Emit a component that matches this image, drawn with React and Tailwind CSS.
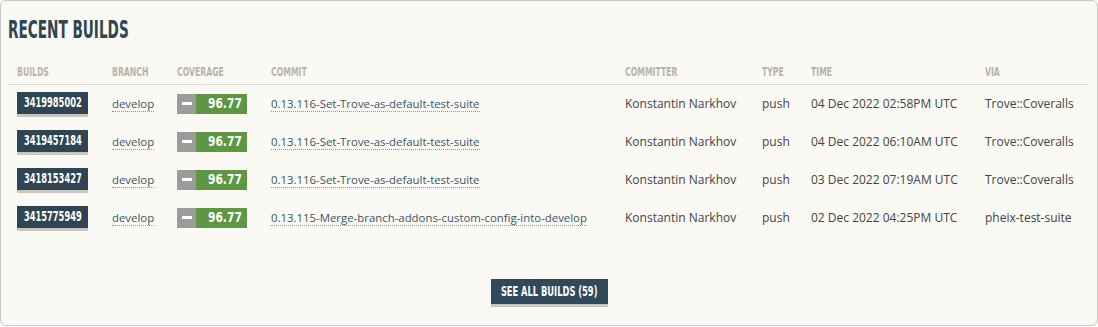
const builds = [
  { id: "3419985002", commit: "0.13.116-Set-Trove-as-default-test-suite", time: "04 Dec 2022 02:58PM UTC", via: "Trove::Coveralls" },
  { id: "3419457184", commit: "0.13.116-Set-Trove-as-default-test-suite", time: "04 Dec 2022 06:10AM UTC", via: "Trove::Coveralls" },
  { id: "3418153427", commit: "0.13.116-Set-Trove-as-default-test-suite", time: "03 Dec 2022 07:19AM UTC", via: "Trove::Coveralls" },
  { id: "3415775949", commit: "0.13.115-Merge-branch-addons-custom-config-into-develop", time: "02 Dec 2022 04:25PM UTC", via: "pheix-test-suite" },
]

// condensed headline font, squeezed with scale-x below
const cond = "font-['DejaVu_Sans_Condensed',sans-serif] font-bold"

const App = () => {
  return (
    <div className="w-[1098px] h-[327px] bg-white">
      <div className="h-[326px] border border-[#c8c8c8] rounded-[6px] bg-[#faf9f4] px-[7px] pt-[14px] font-['Open_Sans',sans-serif]">
        <h2 className={`${cond} text-[24px] leading-[30px] text-[#2f4553] whitespace-nowrap`}>
          <span className="inline-block scale-x-[0.63] origin-left">RECENT BUILDS</span>
        </h2>

        <table className="mt-[19px] w-[1081px] table-fixed border-collapse">
          <colgroup>
            <col className="w-[95px]" />
            <col className="w-[65px]" />
            <col className="w-[94px]" />
            <col className="w-[354px]" />
            <col className="w-[137px]" />
            <col className="w-[49px]" />
            <col className="w-[174px]" />
            <col />
          </colgroup>
          <thead>
            <tr className={`${cond} text-[13px] text-[#b8b2a9] text-left border-b border-[#e2ded6]`}>
              {["BUILDS", "BRANCH", "COVERAGE", "COMMIT", "COMMITTER", "TYPE", "TIME", "VIA"].map((h) => (
                <th key={h} className="pl-[9px] pb-[4px] font-bold leading-[16px] whitespace-nowrap">
                  <span className="inline-block scale-x-[0.66] origin-left">{h}</span>
                </th>
              ))}
            </tr>
          </thead>
          <tbody>
            {builds.map((b) => (
              <tr key={b.id} className="h-[38px] text-[12px] text-[#444]">
                <td className="pl-[9px]">
                  <div className={`${cond} flex justify-center items-center w-[71px] h-[22px] mb-[2px] bg-[#2f4553] text-white text-[14px] shadow-[0_3px_0_#c9c6bf] whitespace-nowrap`}>
                    <span className="inline-block scale-x-[0.66]">{b.id}</span>
                  </div>
                </td>
                <td className="pl-[9px]">
                  <span className="text-[11.4px] text-[#3c5568] border-b border-dotted border-[#8a96a0]">develop</span>
                </td>
                <td className="pl-[9px]">
                  <div className="flex h-[20px] w-[70px]">
                    <div className="w-[19px] bg-[#9b9b9b] flex items-center justify-center">
                      <div className="w-[10px] h-[3px] bg-white" />
                    </div>
                    <div className={`${cond} flex-1 bg-[#5e9743] text-white text-[14px] flex items-center justify-end pr-[5px] whitespace-nowrap`}>
                      <span className="inline-block scale-x-[0.85] origin-right">96.77</span>
                    </div>
                  </div>
                </td>
                <td className="pl-[9px] whitespace-nowrap">
                  <span className="text-[11.4px] text-[#3c5568] border-b border-dotted border-[#8a96a0]">{b.commit}</span>
                </td>
                <td className="pl-[9px] whitespace-nowrap">Konstantin Narkhov</td>
                <td className="pl-[9px]">push</td>
                <td className="pl-[9px] whitespace-nowrap">{b.time}</td>
                <td className="pl-[9px] whitespace-nowrap">{b.via}</td>
              </tr>
            ))}
          </tbody>
        </table>

        <div className="flex justify-center mt-[42px]">
          <button className={`${cond} flex items-center justify-center w-[117px] h-[25px] bg-[#2f4a5a] text-white text-[14px] shadow-[0_3px_0_#c9c6bf] ml-[1px] whitespace-nowrap`}>
            <span className="inline-block scale-x-[0.66]">SEE ALL BUILDS (59)</span>
          </button>
        </div>
      </div>
    </div>
  )
}

export default App
